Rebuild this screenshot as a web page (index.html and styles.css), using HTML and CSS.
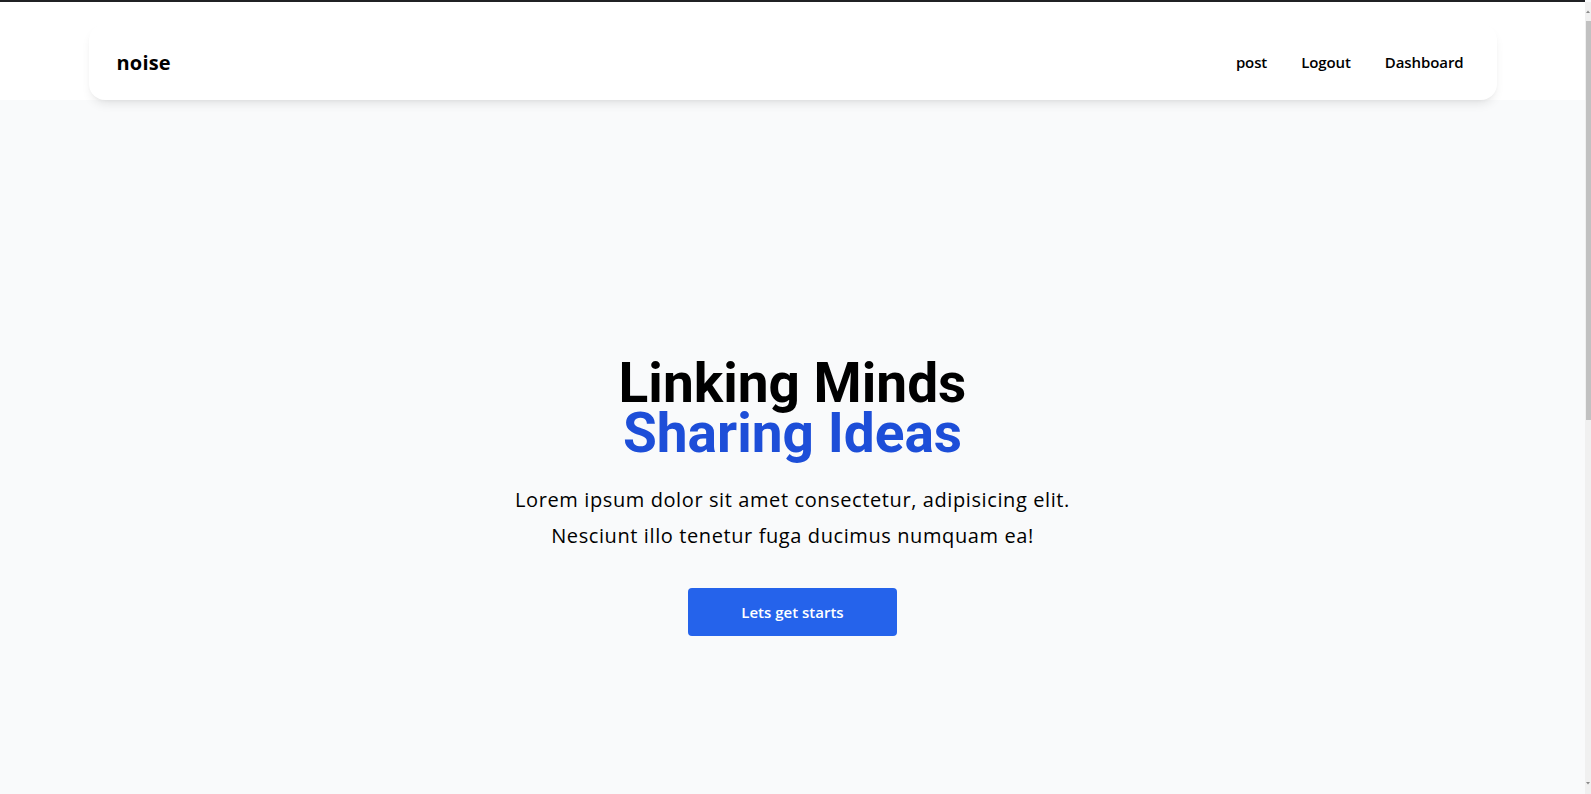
FILE: index.html
```html
<!DOCTYPE html>
<html lang="en">
<head>
<meta charset="utf-8">
<title>noise</title>
<link rel="stylesheet" href="styles.css">
</head>
<body>
  <header class="site-header">
    <nav class="navbar">
      <a class="brand" href="#">noise</a>
      <ul class="nav-links">
        <li><a href="#">post</a></li>
        <li><a href="#">Logout</a></li>
        <li><a href="#">Dashboard</a></li>
      </ul>
    </nav>
  </header>
  <main>
    <section class="hero">
      <h1 class="hero-title"><span class="line">Linking Minds</span><span class="line accent">Sharing Ideas</span></h1>
      <p class="hero-text">Lorem ipsum dolor sit amet consectetur, adipisicing elit.<br>Nesciunt illo tenetur fuga ducimus numquam ea!</p>
      <a class="btn-primary" href="#">Lets get starts</a>
    </section>
  </main>
  <div class="scrollbar" aria-hidden="true">
    <svg class="scroll-arrow up" width="6" height="4" viewBox="0 0 6 4"><path d="M1 4 L3 1.5 L5 4 Z" fill="#8a8a8a"/></svg>
    <div class="scroll-thumb"></div>
    <svg class="scroll-arrow down" width="6" height="4" viewBox="0 0 6 4"><path d="M1 0 L3 2.5 L5 0 Z" fill="#8a8a8a"/></svg>
  </div>
</body>
</html>
```

FILE: styles.css
```css
html {
  background: #f9fafb;
}

body {
  margin: 0;
  padding-right: 6px;
  font-family: "Open Sans", "Liberation Sans", sans-serif;
  color: #000;
  background: #f9fafb;
}

a {
  color: inherit;
  text-decoration: none;
}

.site-header {
  background: #fff;
  border-top: 2px solid #202124;
  padding-top: 22px;
}

.navbar {
  width: 1408px;
  height: 76px;
  margin: 0 auto;
  box-sizing: border-box;
  padding: 0 33px 0 28px;
  display: flex;
  align-items: center;
  justify-content: space-between;
  background: #fff;
  border-radius: 16px;
  box-shadow: 0 6px 12px -4px rgba(0, 0, 0, 0.12), 0 2px 5px -3px rgba(0, 0, 0, 0.08);
  position: relative;
}

.brand {
  font-size: 20px;
  font-weight: 700;
  letter-spacing: 0.2px;
}

.nav-links {
  list-style: none;
  margin: 0;
  padding: 0;
  display: flex;
  gap: 34px;
}

.nav-links a {
  font-size: 15px;
  font-weight: 600;
  letter-spacing: -0.1px;
}

.hero {
  min-height: 100vh;
  box-sizing: border-box;
  display: flex;
  flex-direction: column;
  align-items: center;
  justify-content: center;
  text-align: center;
}

.hero-title {
  margin: 0;
  font-family: "Roboto", "Liberation Sans", sans-serif;
  font-size: 55px;
  line-height: 50px;
  font-weight: 700;
}

.hero-title .line {
  display: block;
}

.hero-title .accent {
  color: #1d4ed8;
}

.hero-text {
  margin: 24px 0 0;
  font-size: 20px;
  line-height: 36px;
  letter-spacing: 0.6px;
}

.btn-primary {
  margin-top: 34px;
  width: 209px;
  height: 48px;
  display: flex;
  align-items: center;
  justify-content: center;
  background: #2563eb;
  color: #fff;
  border-radius: 4px;
  font-size: 15px;
  font-weight: 600;
}

.scrollbar {
  position: fixed;
  top: 2px;
  right: 0;
  bottom: 0;
  width: 6px;
  background: #f0f0f0;
  display: flex;
  flex-direction: column;
  align-items: stretch;
}

.scroll-arrow {
  display: block;
  margin: 7px 0 4px;
}

.scroll-arrow.down {
  margin: auto 0 8px;
}

.scroll-thumb {
  margin: 4px 0 0 1px;
  height: 399px;
  background: #c1c1c1;
}
```
